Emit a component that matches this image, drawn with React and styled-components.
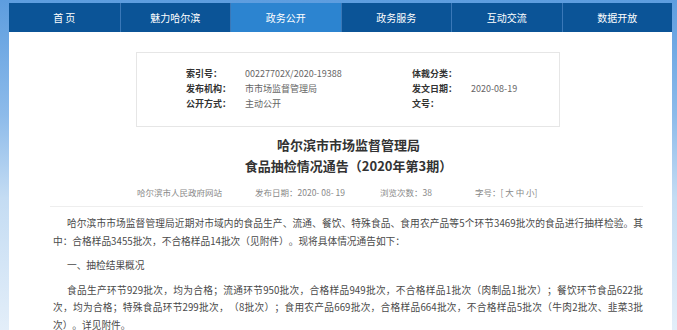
import React from 'react';
import styled, { createGlobalStyle } from 'styled-components';

const GlobalStyle = createGlobalStyle`
  html, body {
    margin: 0;
    padding: 0;
  }
  body {
    width: 677px;
    height: 330px;
    overflow: hidden;
    background: linear-gradient(180deg, #5d9ddf 0%, #8dbbea 35%, #c4dcf3 60%, #e3eef9 100%);
    font-family: "Noto Sans CJK SC", "Noto Sans", sans-serif;
    text-spacing-trim: space-all;
  }
`;

const Page = styled.div`
  margin-left: 9px;
  width: 663px;
  padding-top: 3px;
`;

const Nav = styled.nav`
  display: grid;
  grid-template-columns: repeat(6, 1fr);
  height: 29px;
  background: #0b5497;
`;

const NavItem = styled.a`
  display: flex;
  align-items: center;
  justify-content: center;
  color: #fff;
  font-size: 10px;
  text-decoration: none;
  background: ${(p) => (p.active ? '#2c84d0' : 'transparent')};
  border-left: ${(p) => (p.first ? 'none' : '1px solid #3a78b8')};
`;

const Content = styled.main`
  background: #fff;
  height: 298px;
  padding-top: 20px;
  box-sizing: border-box;
`;

const InfoBox = styled.div`
  margin-left: 127px;
  width: 424px;
  height: 75px;
  box-sizing: border-box;
  border: 1px solid #e6e6e6;
  padding: 13px 0 0 49px;
  display: grid;
  grid-template-columns: 226px 1fr;
  grid-auto-rows: 15px;
`;

const InfoCell = styled.div`
  display: flex;
  align-items: center;
  font-size: 9px;
`;

const Label = styled.span`
  width: 59px;
  color: #333;
  font-weight: bold;
`;

const Value = styled.span`
  color: #666;
`;

const Title = styled.h1`
  margin: 7px 0 0;
  text-align: center;
  font-size: 13px;
  line-height: 21px;
  font-weight: bold;
  color: #333;
  padding-left: 16px;
`;

const Meta = styled.div`
  display: flex;
  align-items: center;
  height: 14px;
  margin-top: 9px;
  padding-left: 128px;
  font-size: 8.5px;
  color: #888;
`;

const MetaItem = styled.span`
  width: ${(p) => p.w}px;
  white-space: nowrap;
`;

const Body = styled.section`
  margin: 7px 29px 0 41px;
  border-top: 1px solid #eeeeee;
  padding: 8px 0 0 3px;
`;

const Para = styled.p`
  margin: 0 0 7px;
  font-size: 9.7px;
  line-height: 17.5px;
  color: #4a4a4a;
  text-indent: 14px;
  text-align: justify;
`;

const NoBreak = styled.span`
  white-space: nowrap;
`;

const navItems = ['首 页', '魅力哈尔滨', '政务公开', '政务服务', '互动交流', '数据开放'];

const info = [
  ['索引号：', '00227702X/2020-19388'],
  ['体裁分类：', ''],
  ['发布机构：', '市市场监督管理局'],
  ['发文日期：', '2020-08-19'],
  ['公开方式：', '主动公开'],
  ['文号：', ''],
];

export default function App() {
  return (
    <>
      <GlobalStyle />
      <Page>
        <Nav>
          {navItems.map((n, i) => (
            <NavItem key={n} first={i === 0} active={i === 2}>
              {n}
            </NavItem>
          ))}
        </Nav>
        <Content>
          <InfoBox>
            {info.map(([l, v]) => (
              <InfoCell key={l}>
                <Label>{l}</Label>
                <Value>{v}</Value>
              </InfoCell>
            ))}
          </InfoBox>
          <Title>
            哈尔滨市市场监督管理局
            <br />
            食品抽检情况通告（2020年第3期）
          </Title>
          <Meta>
            <MetaItem w={118}>哈尔滨市人民政府网站</MetaItem>
            <MetaItem w={125}>发布日期：2020- 08- 19</MetaItem>
            <MetaItem w={95}>浏览次数：38</MetaItem>
            <MetaItem w={80}>字号：[ 大 中 小]</MetaItem>
          </Meta>
          <Body>
            <Para>
              哈尔滨市市场监督管理局近期对市域内的食品生产、流通、餐饮、特殊食品、食用农产品等5个环节3469批次的食品进行抽样检验。其中：合格样品3455批次，不合格样品14批次（见附件）。现将具体情况通告如下：
            </Para>
            <Para>一、抽检结果概况</Para>
            <Para>
              食品生产环节929批次，均为合格；流通环节950批次，合格样品949批次，不合格样品1批次（肉制品1批次）；餐饮环节食品622批次，均为合格；特殊食品环节299批次，（8批次）；食用农产品669批次，合格样品664批次，不合格样品5批次（牛肉2批次、韭菜3批<NoBreak>次）。</NoBreak>详见附件。
            </Para>
          </Body>
        </Content>
      </Page>
    </>
  );
}
